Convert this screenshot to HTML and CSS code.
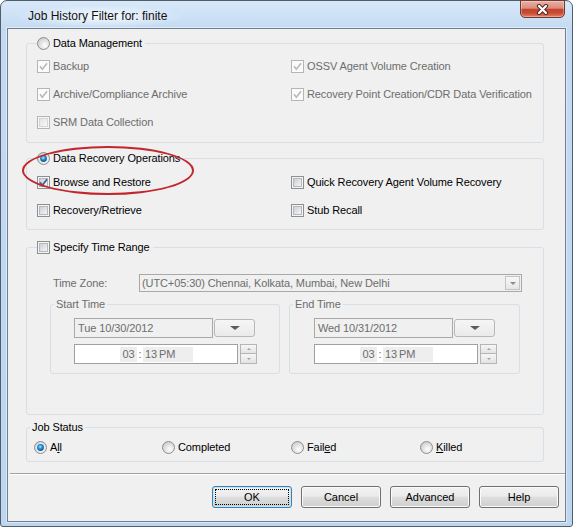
FILE: index.html
```html
<!DOCTYPE html>
<html lang="en">
<head>
    <meta charset="UTF-8">
    <title>Job History Filter for: finite</title>
    <link rel="stylesheet" href="styles.css">
</head>
<body>
    <!-- shared glyphs for the classic check boxes and radio buttons -->
    <svg class="defs" width="0" height="0">
        <defs>
            <linearGradient id="box-fill" x1="0" y1="0" x2="1" y2="1">
                <stop offset="0" stop-color="#c8ccd1"/>
                <stop offset="1" stop-color="#f8f8f8"/>
            </linearGradient>
            <linearGradient id="box-fill-off" x1="0" y1="0" x2="1" y2="1">
                <stop offset="0" stop-color="#e2e2e2"/>
                <stop offset="1" stop-color="#fafafa"/>
            </linearGradient>
            <radialGradient id="radio-fill" cx="0.6" cy="0.65" r="0.65">
                <stop offset="0" stop-color="#ffffff"/>
                <stop offset="1" stop-color="#cdcdcd"/>
            </radialGradient>
            <radialGradient id="radio-dot" cx="0.45" cy="0.4" r="0.6">
                <stop offset="0" stop-color="#b0ecff"/>
                <stop offset="0.45" stop-color="#2a98de"/>
                <stop offset="1" stop-color="#0b4a82"/>
            </radialGradient>
            <symbol id="cb" viewBox="0 0 13 13">
                <rect x="0.5" y="0.5" width="12" height="12" fill="#f4f4f4" stroke="#8e8f8f"/>
                <rect x="2.5" y="2.5" width="8" height="8" fill="url(#box-fill)" stroke="#b4b9bf"/>
            </symbol>
            <symbol id="cb-off" viewBox="0 0 13 13">
                <rect x="0.5" y="0.5" width="12" height="12" fill="#f7f7f7" stroke="#b5b5b5"/>
                <rect x="2.5" y="2.5" width="8" height="8" fill="url(#box-fill-off)" stroke="#d6d6d6"/>
            </symbol>
            <symbol id="tick" viewBox="0 0 13 13">
                <path d="M3 6.3 L5.3 9.2 L10 3.2" fill="none" stroke="#4a5d99" stroke-width="1.8"/>
            </symbol>
            <symbol id="tick-off" viewBox="0 0 13 13">
                <rect x="1" y="1" width="11" height="11" fill="#fbfbfb"/>
                <path d="M3 6.3 L5.3 9.2 L10 3.2" fill="none" stroke="#b9b9b9" stroke-width="1.6"/>
            </symbol>
            <symbol id="rb" viewBox="0 0 13 13">
                <circle cx="6.5" cy="6.5" r="6" fill="url(#radio-fill)" stroke="#8e8f8f"/>
            </symbol>
            <symbol id="rb-dot" viewBox="0 0 13 13">
                <circle cx="6.5" cy="6.5" r="4.3" fill="#eaf6fd"/>
                <circle cx="6.5" cy="6.5" r="3.4" fill="url(#radio-dot)"/>
            </symbol>
        </defs>
    </svg>

    <div class="window">
        <div class="titlebar">
            <span class="title">Job History Filter for: finite</span>
            <span class="close">
                <svg width="13" height="11" viewBox="0 0 13 11">
                    <path d="M3 2 L10 9 M10 2 L3 9" stroke="#4b2a28" stroke-width="4.2" stroke-linecap="round"/>
                    <path d="M3 2 L10 9 M10 2 L3 9" stroke="#ffffff" stroke-width="2.2" stroke-linecap="round"/>
                </svg>
            </span>
        </div>

        <div class="client">
            <fieldset class="group group-dm">
                <legend>
                    <svg class="mark"><use href="#rb"/></svg>
                    <span>Data Management</span>
                </legend>
                <div class="options rows-3">
                    <label class="option off"><svg class="mark"><use href="#cb-off"/><use href="#tick-off"/></svg><span>Backup</span></label>
                    <label class="option off"><svg class="mark"><use href="#cb-off"/><use href="#tick-off"/></svg><span>OSSV Agent Volume Creation</span></label>
                    <label class="option off"><svg class="mark"><use href="#cb-off"/><use href="#tick-off"/></svg><span>Archive/Compliance Archive</span></label>
                    <label class="option off"><svg class="mark"><use href="#cb-off"/><use href="#tick-off"/></svg><span>Recovery Point Creation/CDR Data Verification</span></label>
                    <label class="option off"><svg class="mark"><use href="#cb-off"/></svg><span>SRM Data Collection</span></label>
                </div>
            </fieldset>

            <fieldset class="group group-dr">
                <legend>
                    <svg class="mark"><use href="#rb"/><use href="#rb-dot"/></svg>
                    <span>Data Recovery Operations</span>
                </legend>
                <div class="options">
                    <label class="option"><svg class="mark"><use href="#cb"/><use href="#tick"/></svg><span>Browse and Restore</span></label>
                    <label class="option"><svg class="mark"><use href="#cb"/></svg><span>Quick Recovery Agent Volume Recovery</span></label>
                    <label class="option"><svg class="mark"><use href="#cb"/></svg><span>Recovery/Retrieve</span></label>
                    <label class="option"><svg class="mark"><use href="#cb"/></svg><span>Stub Recall</span></label>
                </div>
            </fieldset>

            <fieldset class="group group-time">
                <legend>
                    <svg class="mark"><use href="#cb"/></svg>
                    <span>Specify Time Range</span>
                </legend>
                <div class="zone-row">
                    <span class="zone-label">Time Zone:</span>
                    <span class="combo">
                        <span class="combo-text">(UTC+05:30) Chennai, Kolkata, Mumbai, New Delhi</span>
                        <span class="combo-drop"><i class="arrow"></i></span>
                    </span>
                </div>
                <div class="range">
                    <fieldset class="sub">
                        <legend>Start Time</legend>
                        <div class="date-row">
                            <span class="date-box">Tue 10/30/2012</span>
                            <span class="date-drop"><i class="arrow big"></i></span>
                        </div>
                        <div class="time-row">
                            <span class="time-box">
                                <span class="seg hour">03</span><span class="colon">:</span><span class="seg minute">13 PM</span>
                            </span>
                            <span class="spin"><span class="spin-btn"><i class="tiny up"></i></span><span class="spin-btn"><i class="tiny"></i></span></span>
                        </div>
                    </fieldset>
                    <fieldset class="sub sub-end">
                        <legend>End Time</legend>
                        <div class="date-row">
                            <span class="date-box">Wed 10/31/2012</span>
                            <span class="date-drop"><i class="arrow big"></i></span>
                        </div>
                        <div class="time-row">
                            <span class="time-box">
                                <span class="seg hour">03</span><span class="colon">:</span><span class="seg minute">13 PM</span>
                            </span>
                            <span class="spin"><span class="spin-btn"><i class="tiny up"></i></span><span class="spin-btn"><i class="tiny"></i></span></span>
                        </div>
                    </fieldset>
                </div>
            </fieldset>

            <fieldset class="group group-status">
                <legend>Job Status</legend>
                <div class="status-row">
                    <label class="option"><svg class="mark"><use href="#rb"/><use href="#rb-dot"/></svg><span>A<u>l</u>l</span></label>
                    <label class="option"><svg class="mark"><use href="#rb"/></svg><span>Completed</span></label>
                    <label class="option"><svg class="mark"><use href="#rb"/></svg><span>Fail<u>e</u>d</span></label>
                    <label class="option"><svg class="mark"><use href="#rb"/></svg><span><u>K</u>illed</span></label>
                </div>
            </fieldset>

            <div class="rule"></div>

            <div class="buttons">
                <button class="btn default">OK</button>
                <button class="btn">Cancel</button>
                <button class="btn">Advanced</button>
                <button class="btn">Help</button>
            </div>

            <!-- red annotation ring around the selected recovery option -->
            <div class="ring"></div>
        </div>
    </div>
</body>
</html>
```

FILE: styles.css
```css
* {
    margin: 0;
    padding: 0;
    box-sizing: border-box;
}

body {
    background: #ffffff;
    font-family: "Liberation Sans", Arial, sans-serif;
    font-size: 11px;
    color: #000000;
}

.defs {
    display: block;
    width: 0;
    height: 0;
}

/* window frame */
.window {
    width: 573px;
    height: 527px;
    display: flex;
    flex-direction: column;
    padding: 0 6px 4px;
    border: 1px solid #4f5d6d;
    border-radius: 7px 7px 3px 3px;
    background: linear-gradient(#d8e8f9, #c4daf2 28px, #bdd5ef);
}

.titlebar {
    height: 27px;
    display: flex;
    align-items: flex-start;
    justify-content: space-between;
}

.title {
    margin: 4px 0 0 9px;
    padding: 5px 18px 5px 12px;
    font-size: 12px;
    line-height: 13px;
    color: #111111;
    background: radial-gradient(ellipse closest-side, rgba(255, 255, 255, 0.8), rgba(255, 255, 255, 0));
}

.close {
    width: 45px;
    height: 18px;
    margin: -1px 1px 0 0;
    display: flex;
    align-items: center;
    justify-content: center;
    border: 1px solid #6d3a34;
    border-radius: 0 0 5px 5px;
    background: linear-gradient(#e9b0a3, #d98d7c 45%, #c4442d 52%, #c94b33 75%, #e38266);
    box-shadow: inset 0 0 0 1px rgba(255, 255, 255, 0.3);
}

.client {
    position: relative;
    flex: 1;
    display: flex;
    flex-direction: column;
    letter-spacing: -0.1px;
    background: #f0f0f0;
    border: 1px solid #707e8d;
    box-shadow: 0 0 0 1px rgba(255, 255, 255, 0.45);
}

/* group boxes */
.group {
    margin: 0 21px 0 18px;
    padding: 0 0 6px;
    border: 1px solid #d5dfe5;
    border-radius: 3px;
}

.group > legend {
    display: flex;
    align-items: center;
    gap: 3px;
    height: 14px;
    line-height: 14px;
    margin-left: 10px;
    padding-right: 3px;
}

.group-dm {
    margin-top: 7px;
}

.group-dr {
    margin-top: 8px;
    padding-bottom: 5px;
}

.group-time {
    margin-top: 10px;
    padding: 0 21px 40px 23px;
}

.group-time > legend {
    margin-left: -13px;
}

.group-status {
    margin-top: 5px;
    padding-bottom: 4px;
}

.group-status > legend {
    margin-left: 3px;
    padding: 0 2px;
}

.mark {
    width: 13px;
    height: 13px;
    flex: none;
}

.options {
    display: grid;
    grid-template-columns: 254px 1fr;
    grid-auto-rows: 28px;
    align-items: center;
    padding: 3px 0 0 10px;
}

.options.rows-3 {
    padding-top: 2px;
}

.option {
    display: flex;
    align-items: center;
    gap: 3px;
    line-height: 14px;
    white-space: nowrap;
}

.off {
    color: #6d6d6d;
}

/* time range */
.zone-row {
    display: flex;
    align-items: center;
    height: 18px;
    margin-top: 20px;
    color: #6d6d6d;
}

.zone-label {
    width: 89px;
    padding-left: 3px;
}

.combo {
    flex: 1;
    height: 18px;
    display: flex;
    align-items: center;
    padding: 0 1px 0 2px;
    border: 1px solid #a9a9a9;
    background: #f0f0f0;
}

.combo-text {
    flex: 1;
    white-space: nowrap;
}

.combo-drop {
    width: 15px;
    height: 14px;
    display: flex;
    align-items: center;
    justify-content: center;
    border: 1px solid #c3c3c3;
    background: linear-gradient(#f7f7f7, #e6e6e6);
}

.arrow {
    width: 0;
    height: 0;
    border-left: 3px solid transparent;
    border-right: 3px solid transparent;
    border-top: 3px solid #8d8d8d;
}

.arrow.big {
    border-left-width: 5px;
    border-right-width: 5px;
    border-top: 4px solid #5c5c5c;
}

.range {
    display: grid;
    grid-template-columns: 230px 231px;
    column-gap: 9px;
    margin-top: 5px;
}

.sub {
    padding: 0 0 9px 23px;
    border: 1px solid #d5dfe5;
    border-radius: 3px;
    color: #6d6d6d;
}

.sub-end {
    padding-left: 24px;
}

.sub > legend {
    height: 14px;
    line-height: 14px;
    margin-left: -20px;
    padding: 0 2px;
}

.sub-end > legend {
    margin-left: -21px;
}

.date-row {
    display: flex;
    align-items: center;
    height: 20px;
    margin-top: 7px;
}

.date-box {
    width: 139px;
    height: 20px;
    padding-left: 3px;
    line-height: 18px;
    border: 1px solid #a8a8a8;
    background: #f0f0f0;
}

.date-drop {
    width: 41px;
    height: 18px;
    margin-left: 1px;
    display: flex;
    align-items: center;
    justify-content: center;
    border: 1px solid #b8b8b8;
    border-radius: 3px;
    background: linear-gradient(#f6f6f6, #eaeaea);
}

.time-row {
    display: flex;
    margin-top: 6px;
}

.time-box {
    width: 164px;
    height: 20px;
    display: flex;
    align-items: center;
    padding-left: 45px;
    border: 1px solid #a0a0a0;
    background: #ffffff;
}

.seg {
    height: 15px;
    line-height: 15px;
    background: #eeeeee;
}

.hour {
    width: 17px;
    text-align: center;
}

.colon {
    width: 6px;
    text-align: center;
}

.minute {
    width: 50px;
    padding-left: 2px;
    word-spacing: -1px;
}

.spin {
    width: 17px;
    height: 20px;
    margin-left: 2px;
    display: flex;
    flex-direction: column;
}

.spin-btn {
    height: 10px;
    display: flex;
    align-items: center;
    justify-content: center;
    border: 1px solid #b5b5b5;
    background: linear-gradient(#f6f6f6, #e3e3e3);
}

.spin-btn + .spin-btn {
    border-top: none;
}

.tiny {
    width: 0;
    height: 0;
    border-left: 2px solid transparent;
    border-right: 2px solid transparent;
    border-top: 2px solid #a4a4a4;
}

.tiny.up {
    border-top: none;
    border-bottom: 2px solid #a4a4a4;
}

/* job status */
.status-row {
    display: grid;
    grid-template-columns: 128px 129px 129px 1fr;
    grid-auto-rows: 20px;
    align-items: center;
    padding: 3px 0 0 7px;
}

/* footer */
.rule {
    height: 2px;
    margin: 11px 0 0 2px;
    border-top: 1px solid #a0a0a0;
    border-bottom: 1px solid #ffffff;
}

.buttons {
    display: flex;
    justify-content: flex-end;
    gap: 9px;
    margin-top: 11px;
    padding-right: 6px;
}

.btn {
    width: 80px;
    height: 22px;
    font-family: inherit;
    font-size: 11px;
    letter-spacing: 0;
    color: #000000;
    border: 1px solid #707070;
    border-radius: 3px;
    background: linear-gradient(#f2f2f2, #ebebeb 45%, #dddddd 52%, #cfcfcf);
    box-shadow: inset 0 0 0 1px #fbfbfb;
}

.btn.default {
    border-color: #3c7fb1;
    box-shadow: inset 0 0 0 1px #bfe6fa;
    outline: 1px dotted #000000;
    outline-offset: -4px;
}

.ring {
    position: absolute;
    left: 14px;
    top: 117px;
    width: 172px;
    height: 49px;
    border: 2px solid #c1272d;
    border-radius: 50%;
}
```
